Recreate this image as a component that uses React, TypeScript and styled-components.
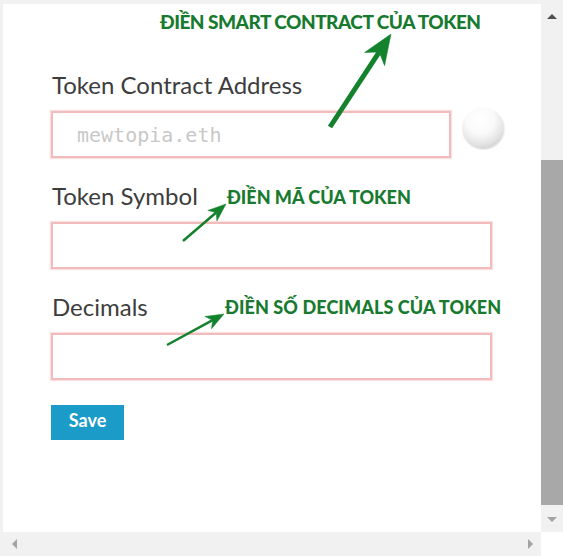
import React from 'react';
import styled, { createGlobalStyle } from 'styled-components';

const GlobalStyle = createGlobalStyle`
  html, body {
    margin: 0;
    padding: 0;
    background: #f1f1f1;
  }
  * {
    box-sizing: border-box;
  }
`;

const Screen = styled.div`
  display: grid;
  grid-template-columns: 538px 22px;
  grid-template-rows: 528px 24px;
  padding: 4px 0 0 3px;
  width: 563px;
  height: 556px;
  overflow: hidden;
`;

const Panel = styled.div`
  position: relative;
  background: #fff;
  padding: 67px 0 0 48px;
  font-family: Lato, 'Noto Sans', sans-serif;
`;

const Label = styled.div`
  font-size: 24px;
  line-height: 28px;
  color: #3d3d3d;
  margin: 0 0 12px 1px;
`;

const Field = styled.div`
  display: flex;
  align-items: flex-start;
  margin-bottom: 24px;
`;

const TextInput = styled.input<{ $width: number }>`
  width: ${(p) => p.$width}px;
  height: 47px;
  border: 2px solid #f3bcbc;
  box-shadow: 0 0 1px 1px rgba(240, 170, 170, 0.35);
  outline: none;
  padding: 0 0 0 24px;
  font-family: 'DejaVu Sans Mono', 'Liberation Mono', monospace;
  font-size: 20px;
  color: #333;
  background: #fff;
  &::placeholder {
    color: #c8c8c8;
  }
`;

const Orb = styled.div`
  width: 41px;
  height: 40px;
  margin: -3px 0 0 12px;
  border-radius: 50%;
  background: radial-gradient(circle at 42% 30%, #ffffff 0%, #fafafa 38%, #e2e2e2 68%, #b4b4b4 100%);
  box-shadow: 0 1px 2px rgba(0, 0, 0, 0.22);
`;

const SaveButton = styled.button`
  width: 73px;
  height: 35px;
  margin-top: 1px;
  border: none;
  background: #1b9bc7;
  color: #fff;
  font-family: Lato, 'Noto Sans', sans-serif;
  font-weight: 700;
  font-size: 18px;
  padding: 0 0 5px;
  cursor: pointer;
`;

const Note = styled.div<{ $left: number; $top: number; $size: number; $track: number }>`
  position: absolute;
  left: ${(p) => p.$left}px;
  top: ${(p) => p.$top}px;
  font-family: Lato, 'Noto Sans', sans-serif;
  font-weight: 900;
  font-size: ${(p) => p.$size}px;
  letter-spacing: ${(p) => p.$track}px;
  line-height: 1;
  color: #177a2f;
  white-space: nowrap;
`;

const Arrows = styled.svg`
  position: absolute;
  left: -3px;
  top: -4px;
  pointer-events: none;
`;

const VScroll = styled.div`
  display: flex;
  flex-direction: column;
  background: #f1f1f1;
`;

const ScrollButton = styled.div<{ $size: number }>`
  flex: 0 0 ${(p) => p.$size}px;
  display: flex;
  align-items: center;
  justify-content: center;
`;

const Track = styled.div`
  flex: 1;
`;

const Thumb = styled.div`
  margin-top: 132px;
  height: 345px;
  background: #a8a8a8;
`;

const HScroll = styled.div`
  display: flex;
  justify-content: space-between;
  background: #f1f1f1;
  margin-left: -3px;
  padding-left: 3px;
`;

const Corner = styled.div`
  background: #fff;
`;

type Dir = 'up' | 'down' | 'left' | 'right';

const Tri = styled.span<{ $dir: Dir; $color: string }>`
  width: 0;
  height: 0;
  border: 5px solid transparent;
  ${(p) =>
    p.$dir === 'up'
      ? `border-bottom-color: ${p.$color}; border-top-width: 0;`
      : p.$dir === 'down'
      ? `border-top-color: ${p.$color}; border-bottom-width: 0;`
      : p.$dir === 'left'
      ? `border-right-color: ${p.$color}; border-left-width: 0;`
      : `border-left-color: ${p.$color}; border-right-width: 0;`}
`;

type Pt = [number, number];

// shaft plus a notched head, tip at `to`
function Arrow({ from, to, head, half, stroke }: { from: Pt; to: Pt; head: number; half: number; stroke: number }) {
  const dx = to[0] - from[0];
  const dy = to[1] - from[1];
  const len = Math.hypot(dx, dy);
  const ux = dx / len;
  const uy = dy / len;
  const nx = -uy;
  const ny = ux;
  const bx = to[0] - ux * head;
  const by = to[1] - uy * head;
  const kx = to[0] - ux * head * 0.72;
  const ky = to[1] - uy * head * 0.72;
  const pts = [
    to,
    [bx + nx * half, by + ny * half],
    [kx, ky],
    [bx - nx * half, by - ny * half],
  ]
    .map((p) => p.join(','))
    .join(' ');
  return (
    <g fill="#14822d" stroke="#14822d">
      <line x1={from[0]} y1={from[1]} x2={kx} y2={ky} strokeWidth={stroke} />
      <polygon points={pts} strokeWidth={0.5} strokeLinejoin="round" />
    </g>
  );
}

const App = () => {
  return (
    <>
      <GlobalStyle />
      <Screen>
        <Panel>
          <Label>Token Contract Address</Label>
          <Field>
            <TextInput $width={400} placeholder="mewtopia.eth" />
            <Orb />
          </Field>

          <Label>Token Symbol</Label>
          <Field>
            <TextInput $width={441} />
          </Field>

          <Label>Decimals</Label>
          <Field>
            <TextInput $width={441} />
          </Field>

          <SaveButton type="button">Save</SaveButton>

          <Note $left={157} $top={8} $size={19} $track={-0.5}>ĐIỀN SMART CONTRACT CỦA TOKEN</Note>
          <Note $left={224} $top={184} $size={18} $track={0}>ĐIỀN MÃ CỦA TOKEN</Note>
          <Note $left={222} $top={294} $size={18} $track={0.1}>ĐIỀN SỐ DECIMALS CỦA TOKEN</Note>

          <Arrows width={563} height={556}>
            <Arrow from={[330, 127]} to={[391, 34]} head={30} half={12} stroke={5} />
            <Arrow from={[183, 241]} to={[226, 204]} head={18} half={7} stroke={2.5} />
            <Arrow from={[167, 345]} to={[224, 314]} head={18} half={7} stroke={2.5} />
          </Arrows>
        </Panel>

        <VScroll>
          <ScrollButton $size={24}>
            <Tri $dir="up" $color="#505050" />
          </ScrollButton>
          <Track>
            <Thumb />
          </Track>
          <ScrollButton $size={25}>
            <Tri $dir="down" $color="#a3a3a3" />
          </ScrollButton>
        </VScroll>

        <HScroll>
          <ScrollButton $size={22}>
            <Tri $dir="left" $color="#a3a3a3" />
          </ScrollButton>
          <ScrollButton $size={22}>
            <Tri $dir="right" $color="#a3a3a3" />
          </ScrollButton>
        </HScroll>
        <Corner />
      </Screen>
    </>
  );
};

export default App;
